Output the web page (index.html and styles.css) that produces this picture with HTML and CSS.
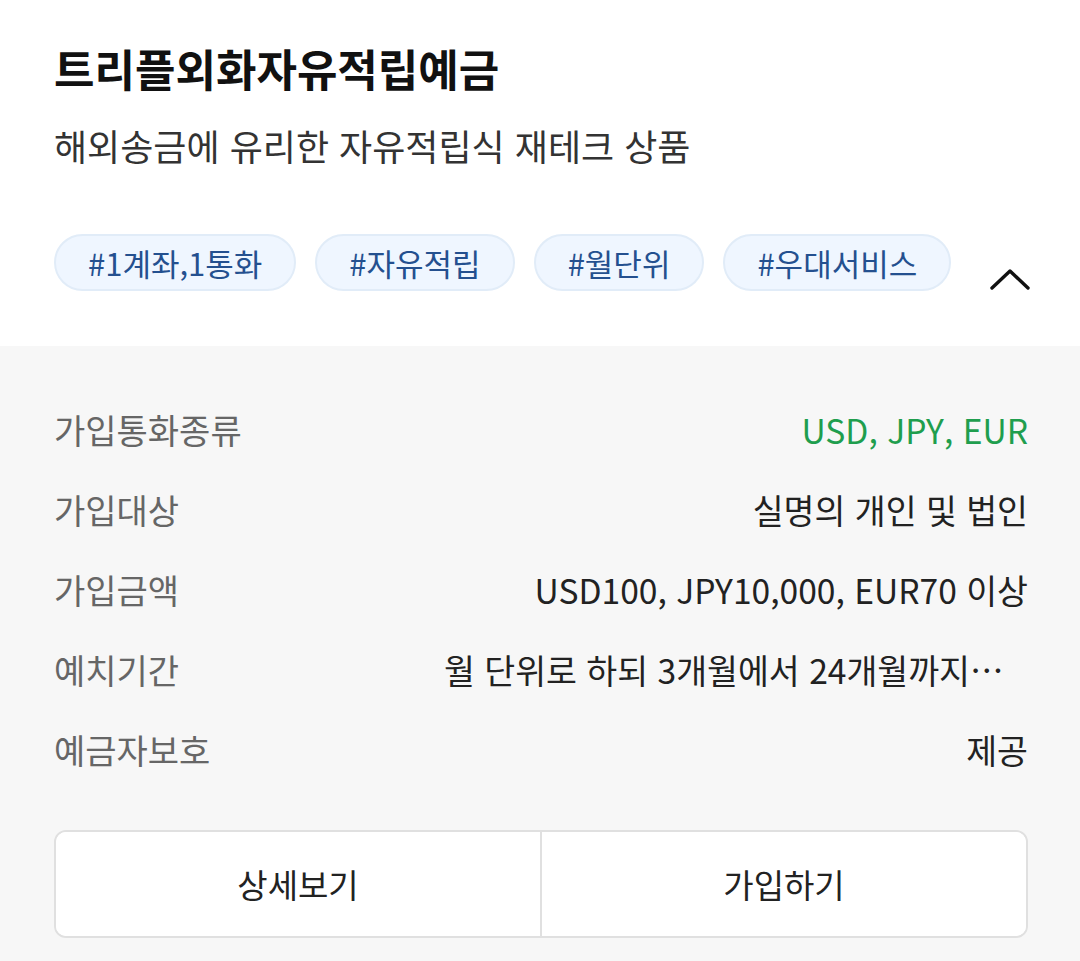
FILE: index.html
```html
<!DOCTYPE html>
<html lang="ko">
<head>
<meta charset="utf-8">
<title>트리플외화자유적립예금</title>
<link rel="stylesheet" href="styles.css">
</head>
<body>
<section class="summary">
  <h1 class="title">트리플외화자유적립예금</h1>
  <p class="subtitle">해외송금에 유리한 자유적립식 재테크 상품</p>
  <div class="tag-row">
    <ul class="tags">
      <li class="tag">#1계좌,1통화</li>
      <li class="tag">#자유적립</li>
      <li class="tag">#월단위</li>
      <li class="tag">#우대서비스</li>
    </ul>
    <button class="toggle" aria-label="접기">
      <svg width="40" height="24" viewBox="0 0 40 24"><path d="M2 21 L20 4 L38 21" fill="none" stroke="#111" stroke-width="3.4" stroke-linecap="round" stroke-linejoin="round"/></svg>
    </button>
  </div>
</section>
<section class="details">
  <dl class="info">
    <div class="row"><dt>가입통화종류</dt><dd class="green">USD, JPY, EUR</dd></div>
    <div class="row"><dt>가입대상</dt><dd>실명의 개인 및 법인</dd></div>
    <div class="row"><dt>가입금액</dt><dd>USD100, JPY10,000, EUR70 이상</dd></div>
    <div class="row"><dt>예치기간</dt><dd class="clip">월 단위로 하되 3개월에서 24개월까지…</dd></div>
    <div class="row"><dt>예금자보호</dt><dd>제공</dd></div>
  </dl>
  <div class="actions">
    <button class="action">상세보기</button>
    <button class="action">가입하기</button>
  </div>
</section>
</body>
</html>
```
FILE: styles.css
```css
* { box-sizing: border-box; }
html, body { margin: 0; padding: 0; }
body {
  font-family: "Noto Sans CJK KR", "Noto Sans", sans-serif;
  background: #f7f7f7;
  color: #222;
  width: 1080px;
}
.summary {
  background: #fff;
  padding: 37px 50px 55px 54px;
}
.title {
  margin: 0;
  font-size: 44px;
  line-height: 62px;
  font-weight: 700;
  color: #111;
}
.subtitle {
  margin: 20px 0 0;
  font-size: 36px;
  line-height: 52px;
  color: #333;
}
.tag-row {
  margin-top: 63px;
  display: flex;
  align-items: flex-end;
  justify-content: space-between;
}
.tags {
  list-style: none;
  margin: 0;
  padding: 0;
  display: flex;
  gap: 19px;
}
.tag {
  height: 57px;
  padding: 0 32px;
  display: flex;
  align-items: center;
  border-radius: 29px;
  background: #eff6ff;
  border: 2px solid #e1ecf8;
  color: #24508f;
  font-size: 31px;
}
.toggle {
  background: none;
  border: 0;
  padding: 0;
  width: 40px;
  height: 24px;
  display: block;
}
.toggle svg { display: block; }
.details {
  padding: 43px 52px 23px 54px;
}
.info { margin: 0; }
.row {
  height: 80px;
  display: flex;
  align-items: center;
  justify-content: space-between;
}
.row dt {
  flex: 0 0 390px;
  font-size: 34px;
  color: #666;
}
.row dd {
  margin: 0;
  flex: 1;
  min-width: 0;
  text-align: right;
  font-size: 33.6px;
  color: #222;
  white-space: nowrap;
}
.row dd.clip { padding-right: 25px; }
.row dd.green { color: #1f9e4e; }
.actions {
  margin-top: 41px;
  height: 108px;
  display: flex;
  background: #fff;
  border: 2px solid #e0e0e0;
  border-radius: 12px;
  overflow: hidden;
}
.action {
  flex: 1;
  background: #fff;
  border: 0;
  font-family: inherit;
  font-size: 33px;
  color: #222;
  padding: 0;
}
.action + .action { border-left: 2px solid #e0e0e0; }
```
